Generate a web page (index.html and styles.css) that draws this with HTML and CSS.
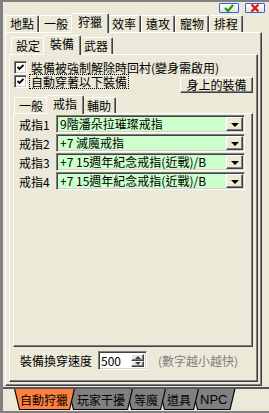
FILE: index.html
```html
<!DOCTYPE html>
<html>
<head>
<meta charset="utf-8">
<link rel="stylesheet" href="styles.css">
</head>
<body>
<div class="win">
  <div class="titlebar">
    <span class="tbtn"><svg width="10" height="8" viewBox="0 0 10 8"><path d="M1 4 L4 7 L9 1" fill="none" stroke="#1a9a1a" stroke-width="2.2"/></svg></span>
    <span class="tbtn"><svg width="10" height="8" viewBox="0 0 10 8"><path d="M1.5 0.5 L8.5 7.5 M8.5 0.5 L1.5 7.5" fill="none" stroke="#e01010" stroke-width="2.2"/></svg></span>
  </div>
  <div class="tabs top">
    <div class="tab">地點</div>
    <div class="tab">一般</div>
    <div class="tab sel">狩獵</div>
    <div class="tab">效率</div>
    <div class="tab">遠攻</div>
    <div class="tab">寵物</div>
    <div class="tab">排程</div>
  </div>
  <div class="panel outer">
    <div class="tabs sub">
      <div class="tab">設定</div>
      <div class="tab sel">裝備</div>
      <div class="tab">武器</div>
    </div>
    <div class="panel mid">
      <div class="chk first"><span class="box"><svg width="7" height="7" viewBox="0 0 7 7"><path d="M0.5 3 L2.5 5 L6.5 1" fill="none" stroke="#000" stroke-width="1.8"/></svg></span><span class="lbl">裝備被強制解除時回村(變身需啟用)</span></div>
      <div class="row2">
        <div class="chk"><span class="box"><svg width="7" height="7" viewBox="0 0 7 7"><path d="M0.5 3 L2.5 5 L6.5 1" fill="none" stroke="#000" stroke-width="1.8"/></svg></span><span class="lbl focus">自動穿著以下裝備</span></div>
        <div class="btn">身上的裝備</div>
      </div>
      <div class="tabs sub3">
        <div class="tab">一般</div>
        <div class="tab sel">戒指</div>
        <div class="tab">輔助</div>
      </div>
      <div class="panel inner">
        <div class="ring"><span class="rl">戒指1</span><div class="combo"><span class="ct">9階潘朵拉璀璨戒指</span><span class="dd"><i></i></span></div></div>
        <div class="ring"><span class="rl">戒指2</span><div class="combo"><span class="ct">+7 滅魔戒指</span><span class="dd"><i></i></span></div></div>
        <div class="ring"><span class="rl">戒指3</span><div class="combo"><span class="ct">+7 15週年紀念戒指(近戰)/B</span><span class="dd"><i></i></span></div></div>
        <div class="ring"><span class="rl">戒指4</span><div class="combo"><span class="ct">+7 15週年紀念戒指(近戰)/B</span><span class="dd"><i></i></span></div></div>
      </div>
      <div class="speed">
        <span class="sl">裝備換穿速度</span>
        <div class="spin"><span class="sv">500</span><span class="sb"><span class="up"><i></i></span><span class="dn"><i></i></span></span></div>
        <span class="hint">(數字越小越快)</span>
      </div>
    </div>
  </div>
  <div class="strip">
    <div class="btab sel"><span>自動狩獵</span></div>
    <div class="btab t2"><span>玩家干擾</span></div>
    <div class="btab t3"><span>等魔</span></div>
    <div class="btab t4"><span>道具</span></div>
    <div class="btab t5"><span>NPC</span></div>
  </div>
</div>
</body>
</html>
```
FILE: styles.css
```css
* { box-sizing: border-box; }
html, body { margin: 0; padding: 0; background: #ece9d8; }
body { font: 12px/13px "Noto Sans CJK TC", "Noto Sans CJK JP", sans-serif; color: #000; }

.win {
  width: 269px; height: 413px;
  border-left: 3px solid #808080; border-top: 2px solid #808080; border-bottom: 2px solid #808080;
  background: #ece9d8;
  display: flex; flex-direction: column;
  overflow: hidden;
}

.titlebar { height: 11px; display: flex; justify-content: flex-end; gap: 6px; padding: 1px 4px 0 0; }
.tbtn {
  width: 20px; height: 10px;
  border: 1px solid #3a62d0; border-radius: 1px;
  background: linear-gradient(#ffffff, #e4e4dc);
  display: flex; align-items: center; justify-content: center;
}
.tbtn svg { display: block; }

/* tabs */
.tabs { display: flex; align-items: flex-end; }
.tabs.top { height: 19px; padding-left: 2px; }
.tabs.sub { height: 19px; padding-left: 2px; }
.tabs.sub3 { height: 18px; padding-left: 1px; margin-top: 2px; }
.tab {
  width: 34px; height: 17px;
  border: 1px solid; border-bottom: 0;
  border-color: #fff #404040 transparent #fff;
  box-shadow: inset -1px 0 #808080;
  border-radius: 2px 2px 0 0;
  text-align: center; line-height: 16px;
  background: #ece9d8;
}
.tab.sel {
  width: 38px; height: 20px; margin: 0 -2px -1px -2px;
  position: relative; z-index: 2;
  line-height: 16px;
}
.tabs.sub3 .tab { height: 16px; line-height: 15px; }
.tabs.sub3 .tab.sel { height: 19px; }

/* panels */
.panel {
  border: 1px solid; border-color: #fff #404040 #404040 #fff;
  box-shadow: inset -1px -1px #808080;
  position: relative; z-index: 1;
}
.outer { margin-left: 2px; width: 257px; height: 354px; padding: 2px 0 0 3px; }
.mid { width: 249px; height: 328px; padding: 6px 0 0 3px; }
.inner { width: 240px; height: 234px; padding: 1px 0 0 0; display: flex; flex-direction: column; gap: 1px; }

/* checkboxes */
.chk { display: flex; align-items: center; height: 13px; margin-left: 1px; }
.chk.first { margin-bottom: 1px; }
.box {
  width: 13px; height: 13px; flex: none;
  border: 1px solid; border-color: #808080 #fff #fff #808080;
  box-shadow: inset 1px 1px #404040, inset -1px -1px #d4d0c8;
  background: #fff;
  display: flex; align-items: center; justify-content: center;
}
.box svg { display: block; }
.lbl { margin-left: 4px; white-space: nowrap; line-height: 13px; }
.lbl.focus { outline: 1px dotted #000; outline-offset: 0; padding: 0 1px; margin-left: 3px; }

.row2 { display: flex; justify-content: space-between; align-items: flex-start; height: 18px; }
.btn {
  width: 73px; height: 16px; margin: 2px 4px 0 0;
  border: 1px solid; border-color: #fff #404040 #404040 #fff;
  box-shadow: inset -1px -1px #808080;
  text-align: center; line-height: 14px;
}

/* rings */
.ring { display: flex; align-items: center; height: 18px; padding-left: 5px; }
.rl { width: 37px; flex: none; }
.combo {
  width: 189px; height: 18px;
  border: 1px solid; border-color: #808080 #fff #fff #808080;
  box-shadow: inset 1px 1px #404040, inset -1px -1px #d4d0c8;
  background: #ccffcc;
  display: flex; align-items: center; padding: 1px 1px 1px 3px;
}
.ct { flex: 1; white-space: nowrap; line-height: 14px; }
.dd {
  width: 17px; height: 14px; flex: none;
  border: 1px solid; border-color: #fff #404040 #404040 #fff;
  box-shadow: inset -1px -1px #808080;
  background: #ece9d8;
  display: flex; align-items: center; justify-content: center;
}
.dd i { width: 0; height: 0; border-left: 4px solid transparent; border-right: 4px solid transparent; border-top: 4px solid #000; margin-top: 1px; }

/* speed */
.speed { display: flex; align-items: center; height: 19px; margin-top: 4px; padding-left: 7px; }
.sl { width: 78px; }
.spin {
  width: 49px; height: 19px;
  border: 1px solid; border-color: #808080 #fff #fff #808080;
  box-shadow: inset 1px 1px #404040, inset -1px -1px #d4d0c8;
  background: #fff;
  display: flex; padding: 2px;
}
.sv { flex: 1; line-height: 13px; padding-left: 0; }
.sb { width: 13px; display: flex; flex-direction: column; }
.sb span {
  flex: 1;
  border: 1px solid; border-color: #fff #404040 #404040 #fff;
  box-shadow: inset -1px -1px #808080;
  background: #ece9d8;
  display: flex; align-items: center; justify-content: center;
}
.sb .up i { width: 0; height: 0; border-left: 3px solid transparent; border-right: 3px solid transparent; border-bottom: 3px solid #24407c; }
.sb .dn i { width: 0; height: 0; border-left: 3px solid transparent; border-right: 3px solid transparent; border-top: 3px solid #24407c; }
.hint { color: #808080; margin-left: 11px; white-space: nowrap; }

/* bottom tab set */
.strip {
  margin-top: 1px; height: 24px;
  border-top: 2px solid #555;
  display: flex; padding-left: 11px; align-items: flex-start;
}
.btab {
  position: relative; height: 21px;
  padding: 0 8px; margin-right: -7px;
  background: #000;
  clip-path: polygon(0 0, 100% 0, calc(100% - 5px) 100%, 5px 100%);
  display: flex; align-items: center;
  font-size: 12px; line-height: 13px;
}
.btab::before {
  content: ""; position: absolute; left: 0; right: 0; top: 0; bottom: 1px;
  background: #808080;
  clip-path: polygon(1.2px 0, calc(100% - 1.2px) 0, calc(100% - 5.9px) 100%, 5.9px 100%);
}
.btab span { position: relative; }
.btab.sel { z-index: 9; padding: 0 7px 0 6px; }
.btab.sel::before { background: #ff8040; }
.btab.t2 { z-index: 8; padding-left: 9px; }
.btab.t3 { z-index: 7; }
.btab.t4 { z-index: 6; }
.btab.t5 { z-index: 5; font-family: "Liberation Sans", sans-serif; font-size: 13px; }
```
